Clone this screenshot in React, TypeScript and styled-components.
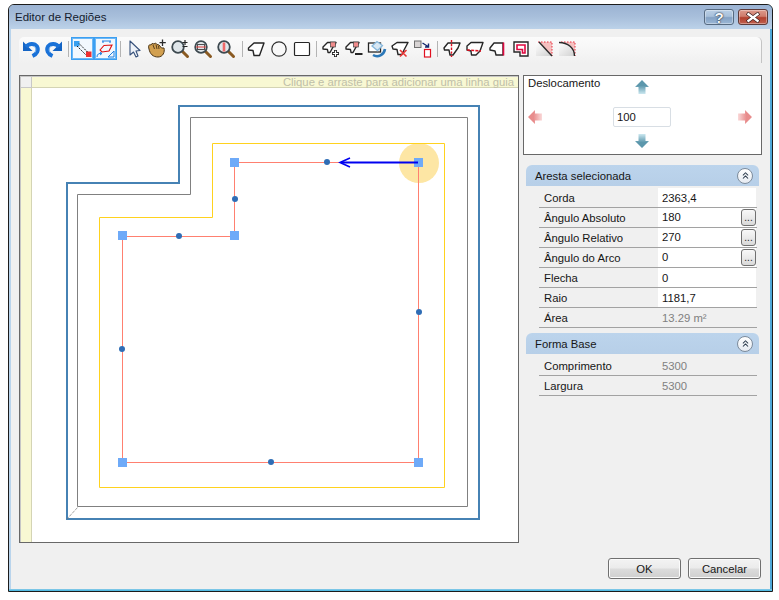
import * as React from "react";
import styled, { createGlobalStyle } from "styled-components";
import { ChevronsUp } from "lucide-react";

const Global = createGlobalStyle`
  html, body {
    margin: 0;
    background: #ffffff;
  }
  body {
    font-family: "Liberation Sans", Arial, sans-serif;
    font-size: 11.3px;
    color: #161616;
  }
`;

const Window = styled.div`
  box-sizing: border-box;
  width: 765px;
  height: 588px;
  margin: 4px 0 0 8px;
  border: 1px solid #1c1c1c;
  border-radius: 6px 6px 0 0;
  display: flex;
  flex-direction: column;
  overflow: hidden;
  background: linear-gradient(90deg, #b9d4ec 0%, #a8d0ec 60%, #4fa8d8 100%);
`;

const TitleBar = styled.div`
  height: 24px;
  flex: none;
  display: flex;
  align-items: flex-start;
  padding: 4px 4px 0 6px;
  box-sizing: border-box;
  background-image: linear-gradient(180deg, #9bb3d3 0%, #a8bfdb 50%, #bcd2e9 100%);
`;

const Title = styled.span`
  line-height: 17px;
  font-size: 11.5px;
  color: #14202e;
  flex: 1;
`;

const CaptionButton = styled.div<{ $close?: boolean }>`
  box-sizing: border-box;
  width: 30px;
  height: 16px;
  margin-left: 4px;
  border: 1px solid ${(p) => (p.$close ? "#5e3a38" : "#566a80")};
  border-radius: 3px;
  display: flex;
  align-items: center;
  justify-content: center;
  font-weight: bold;
  font-size: 15px;
  color: #f4f8fc;
  text-shadow: 0 0 1px #202c3a, 0 0 2px #202c3a;
  box-shadow: inset 0 0 0 1px rgba(255, 255, 255, 0.35);
  background: ${(p) =>
    p.$close
      ? "linear-gradient(180deg, #dd9a8c 0%, #cf7c6c 45%, #b2402e 55%, #c0604e 100%)"
      : "linear-gradient(180deg, #bad0e6 0%, #a8c0da 45%, #84a2c4 55%, #9cb8d6 100%)"};
`;

const Body = styled.div`
  flex: none;
  box-sizing: border-box;
  width: 759px;
  height: 560px;
  margin-left: 2px;
  padding: 8px 8px 0 8px;
  background: #f0f0f0;
`;

const BottomEdge = styled.div`
  flex: 1;
  background: linear-gradient(180deg, #8fcbe8 0%, #3fb6e2 100%);
`;

const Toolbar = styled.div`
  height: 26px;
  display: flex;
  align-items: center;
  padding-bottom: 3px;
  box-sizing: border-box;
  border-radius: 5px 5px 0 0;
  border-right: 1px solid #c4c4c4;
  background: linear-gradient(180deg, #fbfbfb 0%, #f5f5f5 60%, #f0f0f0 100%);
`;

const ToolSlot = styled.div<{ $active?: boolean }>`
  box-sizing: border-box;
  width: 23px;
  height: 23px;
  flex: none;
  display: flex;
  align-items: center;
  justify-content: center;
  ${(p) =>
    p.$active &&
    `border: 1px solid #3c9ff2;
     box-shadow: inset 0 0 0 1px #6cb8f6;
     background: #f2f8fe;`}
`;

const ToolSep = styled.div<{ $l: number; $r: number }>`
  width: 1px;
  height: 16px;
  flex: none;
  margin: 0 ${(p) => p.$r}px 0 ${(p) => p.$l}px;
  background: #b4b4b4;
`;

const Main = styled.div`
  display: flex;
  gap: 4px;
  margin-top: 12px;
`;

const CanvasPanel = styled.div`
  box-sizing: border-box;
  width: 500px;
  height: 468px;
  flex: none;
  border: 1px solid #686868;
  padding: 1px 0 0 1px;
  background: #c6c6c6;
  display: grid;
  grid-template-columns: 11px 1fr;
  grid-template-rows: 11px 1fr;
`;

const RulerCorner = styled.div`
  background: #f0f0f0;
  border-right: 1px solid #c8c8c8;
  border-bottom: 1px solid #c8c8c8;
`;

const RulerTop = styled.div`
  box-sizing: border-box;
  background: #f8f8d3;
  border-bottom: 1px solid #d4d4b4;
  color: #bfbfa9;
  text-align: right;
  padding-right: 4px;
  line-height: 10px;
  white-space: nowrap;
`;

const RulerLeft = styled.div`
  background: #f8f8d3;
  border-right: 1px solid #d4d4b4;
`;

const Sheet = styled.svg`
  display: block;
  background: #ffffff;
`;

const SidePanel = styled.div`
  width: 239px;
  flex: none;
`;

const NudgeBox = styled.div`
  box-sizing: border-box;
  height: 80px;
  border: 1px solid #686868;
  background: #ffffff;
  display: grid;
  grid-template-columns: 89px 58px 1fr;
  grid-template-rows: 31px 20px 1fr;
  align-items: center;
`;

const NudgeTitle = styled.div`
  align-self: start;
  padding-left: 4px;
  line-height: 14px;
`;

const NudgeCell = styled.div<{ $side?: "start" | "end" | "center"; $pad?: string }>`
  display: flex;
  justify-content: ${(p) => p.$side ?? "center"};
  padding: ${(p) => p.$pad ?? "0"};
`;

const NudgeInput = styled.div`
  box-sizing: border-box;
  height: 20px;
  border: 1px solid #d8dee4;
  border-radius: 2px;
  padding-left: 3px;
  line-height: 18px;
  background: #ffffff;
`;

const Section = styled.div<{ $top: number }>`
  margin: ${(p) => p.$top}px 0 0 3px;
  width: 233px;
`;

const SectionHead = styled.div`
  box-sizing: border-box;
  height: 21px;
  margin-bottom: 2px;
  padding: 0 6px 0 9px;
  display: flex;
  align-items: center;
  justify-content: space-between;
  border-radius: 6px 6px 0 0;
  background: linear-gradient(180deg, #bcd4ec 0%, #b7cfe8 100%);
`;

const Collapse = styled.div`
  box-sizing: border-box;
  width: 16px;
  height: 16px;
  border-radius: 50%;
  border: 1px solid #7e8c9c;
  background: linear-gradient(180deg, #ffffff 0%, #e6ebf2 100%);
  display: flex;
  align-items: center;
  justify-content: center;
  color: #2a3a4c;
`;

const PropRow = styled.div`
  box-sizing: border-box;
  width: 218px;
  height: 20px;
  margin-left: 13px;
  padding-right: 1px;
  display: flex;
  border-bottom: 1px solid #a2a2a2;
`;

const PropLabel = styled.div`
  width: 119px;
  flex: none;
  box-sizing: border-box;
  padding: 1px 0 0 5px;
  line-height: 19px;
`;

const PropValue = styled.div<{ $muted?: boolean; $dots?: boolean }>`
  flex: 1;
  display: flex;
  justify-content: space-between;
  padding: ${(p) => (p.$dots ? 0 : 1)}px 0 0 4px;
  line-height: 19px;
  color: ${(p) => (p.$muted ? "#808080" : "#161616")};
  background: ${(p) => (p.$muted ? "transparent" : "#ffffff")};
`;

const DotsButton = styled.div`
  box-sizing: border-box;
  width: 15px;
  height: 17px;
  margin-top: 1px;
  border: 1px solid #707070;
  border-radius: 3px;
  background: linear-gradient(180deg, #f8f8f8 0%, #ebebeb 50%, #d8d8d8 100%);
  text-align: center;
  line-height: 16px;
  font-size: 10px;
  color: #222222;
`;

const Footer = styled.div`
  display: flex;
  justify-content: flex-end;
  gap: 7px;
  margin-top: 15px;
  padding-right: 1px;
`;

const DialogButton = styled.div`
  box-sizing: border-box;
  width: 73px;
  height: 21px;
  border: 1px solid #707070;
  border-radius: 3px;
  text-align: center;
  line-height: 20px;
  box-shadow: inset 0 0 0 1px #fbfbfb;
  background: linear-gradient(180deg, #f3f3f3 0%, #ebebeb 48%, #dcdcdc 52%, #cfcfcf 100%);
`;

const ArrowShape = styled.svg<{ $deg: number }>`
  display: block;
  transform: rotate(${(p) => p.$deg}deg);
`;

function NudgeArrow({ deg, tone }: { deg: number; tone: "teal" | "red" }) {
  const id = `nudge-${tone}-${deg}`;
  const head = tone === "teal" ? "#5c97ac" : "#e88c8c";
  const tail = tone === "teal" ? "#cce8f0" : "#fadada";
  return (
    <ArrowShape $deg={deg} width="14" height="14" viewBox="0 0 14 14">
      <defs>
        <linearGradient id={id} x1="0" y1="0" x2="0" y2="1">
          <stop offset="0.4" stopColor={head} />
          <stop offset="1" stopColor={tail} />
        </linearGradient>
      </defs>
      <path d="M7 0 L14 7 L10.5 7 L10.5 14 L3.5 14 L3.5 7 L0 7 Z" fill={`url(#${id})`} />
    </ArrowShape>
  );
}

// 20x20 tool glyphs
const Glyph = ({ children }: { children: React.ReactNode }) => (
  <svg width="20" height="20" viewBox="0 0 20 20" fill="none">
    {children}
  </svg>
);

const OUTLINE = "#262626";
const REGION = "M2.5 9 L8 4 L18 4 L13.5 16.5 L8 16.5 L7 11.5 L2.5 11 Z";

const Region = ({ d = REGION }: { d?: string }) => (
  <path d={d} fill="#ffffff" stroke={OUTLINE} strokeWidth="1.4" strokeLinejoin="round" />
);

const Undo = ({ flip }: { flip?: boolean }) => (
  <Glyph>
    <g transform={flip ? "translate(20 0) scale(-1 1)" : undefined}>
      <path d="M2 2.5 L2 12 L11.5 12 Z" fill="#1464c4" />
      <path
        d="M5 8 C8 4 13.5 4 16 7.5 C18 11 16 15 11.5 17"
        stroke="#1a72d8"
        strokeWidth="4"
      />
      <path d="M13 7 C15 8.5 15.5 11 14 13.5" stroke="#7ab4ee" strokeWidth="1" />
    </g>
  </Glyph>
);

const MoveNodes = () => (
  <Glyph>
    <rect x="1" y="2" width="5.5" height="5.5" fill="#38a0f0" />
    <rect x="13" y="12.5" width="5.5" height="5.5" fill="#f03030" />
    <path d="M6 4.5 L15 13.5" stroke="#1a1a1a" strokeWidth="1" strokeDasharray="1.6 1" />
    <path d="M4 7 L12.5 15.5" stroke="#1a1a1a" strokeWidth="1" strokeDasharray="1.6 1" />
  </Glyph>
);

const SnapShape = () => (
  <Glyph>
    <path d="M6 2 L15 2 M7 2 L7 4 M14 2 L14 4" stroke="#2080e0" strokeWidth="1.1" />
    <path d="M4 11 L8 6.5 L16 6 L13 12 L6 13 Z" stroke="#e01010" strokeWidth="1.1" />
    <path d="M1 18 C1 15 3 14 6 14.5 M4 13 L6 14.5 L4 16" stroke="#2080e0" strokeWidth="1" />
    <path d="M12 18 L18 12 L18 18 Z" stroke="#2080e0" strokeWidth="1" />
  </Glyph>
);

const Pointer = () => (
  <Glyph>
    <path
      d="M6 2 L6 16 L9.5 13 L12 18 L14 17 L12 12 L16 11.5 Z"
      fill="#eef2f8"
      stroke="#36507a"
      strokeWidth="1.1"
      strokeLinejoin="round"
    />
  </Glyph>
);

const Hand = () => (
  <Glyph>
    <path
      d="M2 10 C1 7 2 5 4 6 L5 4.5 L7 5 L8.5 4 L10 5.5 L12 6 L14.5 9 L17 9 C18 13 16 18 11 18 C6 18 3 15 2 10 Z"
      fill="#d2a050"
      stroke="#4a3416"
      strokeWidth="1"
    />
    <path d="M6 6 L7.5 10 M9 5.5 L10 10 M11.5 7 L12 10" stroke="#4a3416" strokeWidth="0.9" />
    <path d="M15.5 0.5 L15.5 7 M12.5 3.7 L18.8 3.7" stroke="#2c2c2c" strokeWidth="1.3" />
  </Glyph>
);

const Lens = ({ children }: { children?: React.ReactNode }) => (
  <Glyph>
    <path d="M12 12 L17.5 17.5" stroke="#8a5a22" strokeWidth="3" strokeLinecap="round" />
    <circle cx="8" cy="8" r="5.8" fill="#dfe6ea" stroke="#3e4a50" strokeWidth="1.8" />
    {children}
  </Glyph>
);

const Circle = () => (
  <Glyph>
    <circle cx="10" cy="10" r="7.2" fill="#f8f8f8" stroke="#333333" strokeWidth="1.2" />
  </Glyph>
);

const Rect = () => (
  <Glyph>
    <rect x="2.5" y="3.5" width="15" height="13" rx="1" fill="#ffffff" stroke={OUTLINE} strokeWidth="1.2" />
  </Glyph>
);

const AddNode = ({ minus }: { minus?: boolean }) => (
  <Glyph>
    <Region d="M2 8 L6.5 3.5 L15 3.5 L12 8 L9 13.5 L7 13.5 L6.5 10.5 L2 10 Z" />
    <rect x="9.5" y="3" width="5" height="5" fill="#f08c8c" stroke="#404040" strokeWidth="0.7" />
    {minus ? (
      <path d="M11 15 L18.5 15" stroke="#262626" strokeWidth="2" />
    ) : (
      <path
        d="M14.5 11 L14.5 18 M11 14.5 L18 14.5"
        stroke="#262626"
        strokeWidth="3"
      />
    )}
    {!minus && (
      <path d="M14.5 11.8 L14.5 17.2 M11.8 14.5 L17.2 14.5" stroke="#ffffff" strokeWidth="1.2" />
    )}
  </Glyph>
);

const Rotate = () => (
  <Glyph>
    <rect x="1.5" y="4" width="12" height="9" fill="#ffffff" stroke={OUTLINE} strokeWidth="1.3" />
    <path d="M5 7 L10 2.5 L15.5 6.5 L10.5 11.5 Z" fill="#d8e8f4" stroke="#88b8dc" strokeWidth="1.3" />
    <path d="M6 16 C11 19 17 16 18 10" stroke="#2c78b8" strokeWidth="2.6" />
  </Glyph>
);

const RemoveNode = () => (
  <Glyph>
    <Region d="M2 7 L7 3.5 L18 3.5 L14 11 L12 15.5 L8 15.5 L7 10.5 L3 10 Z" />
    <path d="M10 11 L16.5 17.5 M16.5 11 L10 17.5" stroke="#e83838" strokeWidth="1.6" />
  </Glyph>
);

const Swap = () => (
  <Glyph>
    <rect x="1.5" y="2" width="6.5" height="6.5" fill="#d8d4d4" stroke="#707070" strokeWidth="1" />
    <path d="M9.5 4 L15 7.5 M15.5 4.5 L15.5 8 L12 8" stroke="#14286e" strokeWidth="1.4" />
    <rect x="11.5" y="10.5" width="6" height="7.5" fill="#ffffff" stroke="#e01020" strokeWidth="1.2" />
  </Glyph>
);

const SplitV = () => (
  <Glyph>
    <Region d="M2 9 L6 4 L18 4 L16 9 L11 16 L8 16 L7 11 L2.5 11 Z" />
    <path d="M9.5 1 L9.5 18" stroke="#e01020" strokeWidth="1.4" strokeDasharray="2.4 1.4" />
  </Glyph>
);

const SplitH = () => (
  <Glyph>
    <Region d="M2 7 L6 3.5 L18 3.5 L15 12 L11 16 L6.5 16 L6 12 L2 11 Z" />
    <path d="M2 11 L16 12" stroke="#e01020" strokeWidth="1.6" strokeDasharray="3 1.2" />
  </Glyph>
);

const TrimEdge = () => (
  <Glyph>
    <Region d="M2 9 L6 4 L15 4 L15 16 L8 16 L7 12 L2 11 Z" />
    <path d="M15.5 3.5 L15.5 16.5" stroke="#e00840" strokeWidth="1.6" />
  </Glyph>
);

const Offset = () => (
  <Glyph>
    <path d="M3 3 L17 3 L17 17 L9 17 L9 13 L3 13 Z" fill="#ffffff" stroke={OUTLINE} strokeWidth="1.4" />
    <path d="M6 6 L14 6 L14 14 L11.5 14 L11.5 10.5 L6 10.5 Z" fill="#ffffff" stroke="#e00840" strokeWidth="1.6" />
  </Glyph>
);

const Corner = ({ round, id }: { round?: boolean; id: string }) => (
  <Glyph>
    <defs>
      <linearGradient id={id} x1="0" y1="0" x2="1" y2="1">
        <stop offset="0" stopColor="#ffffff" />
        <stop offset="1" stopColor="#d0d0d0" />
      </linearGradient>
    </defs>
    <rect x="2" y="3" width="16" height="14" fill={`url(#${id})`} />
    <path
      d={round ? "M2 3 L18 3 L18 17 C18 9 12 3 2 3 Z" : "M5 3 L18 3 L18 17 Z"}
      fill="#f6c0c0"
    />
    <path d="M4 3 L18 3 L18 17" stroke="#e83040" strokeWidth="1" strokeDasharray="1.5 1.5" />
    <path
      d={round ? "M2 3.5 C11 3.5 17.5 9 17.5 17" : "M5 3 L18 17"}
      stroke="#2a2a2a"
      strokeWidth="1.4"
    />
  </Glyph>
);

const edgeRows = [
  { label: "Corda", value: "2363,4" },
  { label: "Ângulo Absoluto", value: "180", dots: true },
  { label: "Ângulo Relativo", value: "270", dots: true },
  { label: "Ângulo do Arco", value: "0", dots: true },
  { label: "Flecha", value: "0" },
  { label: "Raio", value: "1181,7" },
  { label: "Área", value: "13.29 m²", muted: true },
];

const baseRows = [
  { label: "Comprimento", value: "5300", muted: true },
  { label: "Largura", value: "5300", muted: true },
];

type Row = { label: string; value: string; dots?: boolean; muted?: boolean };

function PropSection({ title, rows, top }: { title: string; rows: Row[]; top: number }) {
  return (
    <Section $top={top}>
      <SectionHead>
        {title}
        <Collapse>
          <ChevronsUp size={11} strokeWidth={2.2} />
        </Collapse>
      </SectionHead>
      {rows.map((r) => (
        <PropRow key={r.label}>
          <PropLabel>{r.label}</PropLabel>
          <PropValue $muted={r.muted} $dots={r.dots}>
            {r.value}
            {r.dots && <DotsButton>...</DotsButton>}
          </PropValue>
        </PropRow>
      ))}
    </Section>
  );
}

const nodes = [
  [234.5, 162.5],
  [418.5, 162.5],
  [234.5, 235.5],
  [122.5, 235.5],
  [122.5, 462.5],
  [418.5, 462.5],
];

const midpoints = [
  [327, 162],
  [235, 199],
  [179, 236],
  [122, 349],
  [419, 312],
  [271, 462],
];

function RegionDrawing() {
  return (
    <Sheet width="486" height="454" viewBox="32 88 486 454">
      <circle cx="419" cy="163" r="20" fill="#fde6a4" />
      <path
        d="M67 519 L67 183 L179 183 L179 106 L479 106 L479 519 Z"
        fill="none"
        stroke="#4682b4"
        strokeWidth="2"
      />
      <path
        d="M77.5 506.5 L77.5 194.5 L190.5 194.5 L190.5 117.5 L467.5 117.5 L467.5 506.5 Z"
        fill="none"
        stroke="#808080"
      />
      <path d="M67 519 L78 507" stroke="#707070" strokeDasharray="1 1" />
      <path
        d="M99.5 487.5 L99.5 217.5 L212.5 217.5 L212.5 143.5 L444.5 143.5 L444.5 487.5 Z"
        fill="none"
        stroke="#ffd21e"
      />
      <path
        d="M234.5 162.5 L418.5 162.5 L418.5 462.5 L122.5 462.5 L122.5 236.5 L234.5 236.5 Z"
        fill="none"
        stroke="#ff8070"
      />
      {nodes.map(([x, y]) => (
        <rect key={`${x}-${y}`} x={x - 4.5} y={y - 4.5} width="9" height="9" fill="#6eaaf8" />
      ))}
      {midpoints.map(([x, y]) => (
        <circle key={`${x}-${y}`} cx={x} cy={y} r="3" fill="#2f6db5" />
      ))}
      <path d="M418 162.5 L341 162.5" stroke="#0000f0" strokeWidth="2" />
      <path
        d="M350 158 L340 162.5 L350 167"
        fill="none"
        stroke="#0000f0"
        strokeWidth="1.6"
      />
    </Sheet>
  );
}

export default function App() {
  return (
    <>
      <Global />
      <Window>
        <TitleBar>
          <Title>Editor de Regiões</Title>
          <CaptionButton>?</CaptionButton>
          <CaptionButton $close>
            <svg width="16" height="11" viewBox="0 0 16 11">
              <path d="M2 1 L14 10 M14 1 L2 10" stroke="#3c2020" strokeWidth="3.6" />
              <path d="M2.5 1.5 L13.5 9.5 M13.5 1.5 L2.5 9.5" stroke="#ffffff" strokeWidth="2.2" />
            </svg>
          </CaptionButton>
        </TitleBar>
        <Body>
          <Toolbar>
            <ToolSlot><Undo /></ToolSlot>
            <ToolSlot><Undo flip /></ToolSlot>
            <ToolSep $l={3} $r={2} />
            <ToolSlot $active><MoveNodes /></ToolSlot>
            <ToolSlot $active><SnapShape /></ToolSlot>
            <ToolSep $l={3} $r={1} />
            <ToolSlot><Pointer /></ToolSlot>
            <ToolSlot><Hand /></ToolSlot>
            <ToolSlot>
              <Lens>
                <path d="M15 1 L15 6 M12.5 3.5 L17.5 3.5 M12.5 7.5 L17.5 7.5" stroke="#262626" strokeWidth="1.2" />
              </Lens>
            </ToolSlot>
            <ToolSlot>
              <Lens>
                <rect x="4.5" y="5.5" width="7" height="5" fill="none" stroke="#505050" />
                <path d="M3 8 L13 8" stroke="#e84040" strokeWidth="1.2" />
              </Lens>
            </ToolSlot>
            <ToolSlot>
              <Lens>
                <path d="M8 3.5 L8 12.5" stroke="#f06868" strokeWidth="2.6" />
              </Lens>
            </ToolSlot>
            <ToolSep $l={5} $r={1} />
            <ToolSlot><Glyph><Region /></Glyph></ToolSlot>
            <ToolSlot><Circle /></ToolSlot>
            <ToolSlot><Rect /></ToolSlot>
            <ToolSep $l={3} $r={2} />
            <ToolSlot><AddNode /></ToolSlot>
            <ToolSlot><AddNode minus /></ToolSlot>
            <ToolSlot><Rotate /></ToolSlot>
            <ToolSlot><RemoveNode /></ToolSlot>
            <ToolSlot><Swap /></ToolSlot>
            <ToolSep $l={3} $r={2} />
            <ToolSlot><SplitV /></ToolSlot>
            <ToolSlot><SplitH /></ToolSlot>
            <ToolSlot><TrimEdge /></ToolSlot>
            <ToolSlot><Offset /></ToolSlot>
            <ToolSlot><Corner id="corner-straight" /></ToolSlot>
            <ToolSlot><Corner id="corner-round" round /></ToolSlot>
          </Toolbar>
          <Main>
            <CanvasPanel>
              <RulerCorner />
              <RulerTop>Clique e arraste para adicionar uma linha guia</RulerTop>
              <RulerLeft />
              <RegionDrawing />
            </CanvasPanel>
            <SidePanel>
              <NudgeBox>
                <NudgeTitle>Deslocamento</NudgeTitle>
                <NudgeCell $pad="0 0 10px 0">
                  <NudgeArrow deg={0} tone="teal" />
                </NudgeCell>
                <div />
                <NudgeCell $side="start" $pad="0 0 0 4px">
                  <NudgeArrow deg={-90} tone="red" />
                </NudgeCell>
                <NudgeInput>100</NudgeInput>
                <NudgeCell $side="end" $pad="0 9px 0 0">
                  <NudgeArrow deg={90} tone="red" />
                </NudgeCell>
                <div />
                <NudgeCell>
                  <NudgeArrow deg={180} tone="teal" />
                </NudgeCell>
                <div />
              </NudgeBox>
              <PropSection title="Aresta selecionada" rows={edgeRows} top={10} />
              <PropSection title="Forma Base" rows={baseRows} top={5} />
            </SidePanel>
          </Main>
          <Footer>
            <DialogButton>OK</DialogButton>
            <DialogButton>Cancelar</DialogButton>
          </Footer>
        </Body>
        <BottomEdge />
      </Window>
    </>
  );
}
